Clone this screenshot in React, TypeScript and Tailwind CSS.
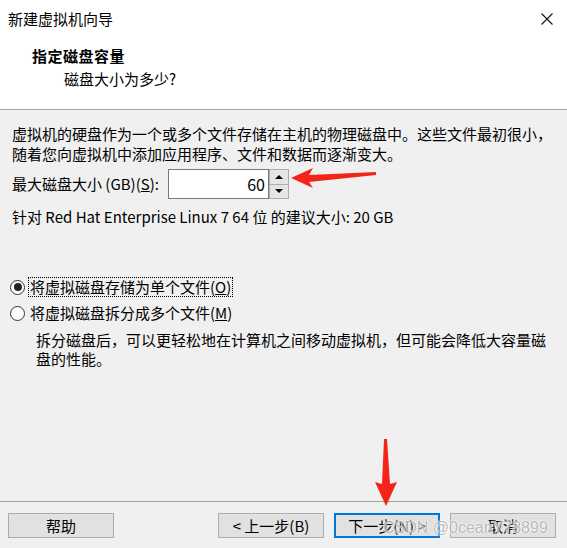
const font = { fontFamily: '"Noto Sans CJK SC", "Noto Sans", sans-serif' };

const Btn = ({ children, primary }: { children: React.ReactNode; primary?: boolean }) => (
  <div
    className={
      "w-[106px] h-[25px] flex items-center justify-center bg-[#e1e1e1] text-[15px] leading-none text-black " +
      (primary ? "border-2 border-[#0078d7]" : "border border-[#adadad]")
    }
  >
    {children}
  </div>
);

const Radio = ({ checked }: { checked?: boolean }) => (
  <div className="w-[15px] h-[15px] rounded-full border border-[#333] bg-white flex items-center justify-center shrink-0">
    {checked && <div className="w-[8px] h-[8px] rounded-full bg-[#222]" />}
  </div>
);

export default function App() {
  return (
    <div
      className="relative w-[567px] h-[548px] flex flex-col bg-[#f0f0f0] overflow-hidden text-black"
      style={font}
    >
      {/* title bar */}
      <div className="h-[38px] bg-white flex items-center justify-between pl-[8px] pr-[14px]">
        <span className="text-[15px] leading-[20px]">新建虚拟机向导</span>
        <svg width="12" height="12" viewBox="0 0 12 12" className="mt-[-1px]">
          <path d="M0.5 0.5 L11.5 11.5 M11.5 0.5 L0.5 11.5" stroke="#111" strokeWidth="1.1" />
        </svg>
      </div>

      {/* header */}
      <div className="h-[72px] bg-white border-b border-[#a0a0a0] pt-[8px]">
        <div className="pl-[32px] text-[15px] leading-[20px] font-bold tracking-[0.5px]">指定磁盘容量</div>
        <div className="pl-[64px] mt-[3px] text-[15px] leading-[20px]">磁盘大小为多少?</div>
      </div>

      {/* body */}
      <div className="flex-1 pl-[12px] pr-[8px] pt-[14px] text-[15px]">
        <p className="leading-[20px] whitespace-nowrap">
          虚拟机的硬盘作为一个或多个文件存储在主机的物理磁盘中。这些文件最初很小，
          <br />
          随着您向虚拟机中添加应用程序、文件和数据而逐渐变大。
        </p>

        <div className="mt-[5px] flex items-center h-[30px]">
          <span className="w-[156px] leading-[20px]">
            最大磁盘大小 (GB)(<span className="underline">S</span>):
          </span>
          <div className="w-[101px] h-[30px] bg-white border border-[#7a7a7a] flex items-center justify-end pr-[3px] text-[16px]">
            60
          </div>
          <div className="flex flex-col w-[20px] h-[30px]">
            <div className="flex-1 bg-[#e5e5e5] border border-[#adadad] flex items-center justify-center">
              <svg width="8" height="4" viewBox="0 0 8 4"><path d="M0 4 L4 0 L8 4 Z" fill="#000" /></svg>
            </div>
            <div className="flex-1 bg-[#e5e5e5] border border-[#adadad] border-t-0 flex items-center justify-center">
              <svg width="8" height="4" viewBox="0 0 8 4"><path d="M0 0 L8 0 L4 4 Z" fill="#000" /></svg>
            </div>
          </div>
        </div>

        <div className="mt-[8px] leading-[20px]">针对 Red Hat Enterprise Linux 7 64 位 的建议大小: 20 GB</div>

        <div className="mt-[50px] flex flex-col gap-[6px]">
          <div className="flex items-center h-[20px] -ml-[2px] gap-[3px]">
            <Radio checked />
            <span className="leading-[18px] border border-dotted border-black px-[1px]">
              将虚拟磁盘存储为单个文件(<span className="underline">O</span>)
            </span>
          </div>
          <div className="flex items-center h-[20px] -ml-[2px] gap-[4px]">
            <Radio />
            <span className="leading-[18px] ml-[1px]">
              将虚拟磁盘拆分成多个文件(<span className="underline">M</span>)
            </span>
          </div>
        </div>

        <p className="mt-[7px] pl-[24px] pr-[10px] leading-[19px]">
          拆分磁盘后，可以更轻松地在计算机之间移动虚拟机，但可能会降低大容量磁盘的性能。
        </p>
      </div>

      {/* footer */}
      <div className="border-t border-[#a0a0a0] pt-[11px] pb-[10px] pl-[8px] pr-[11px] flex justify-between">
        <Btn>帮助</Btn>
        <div className="flex gap-[10px]">
          <Btn>&lt; 上一步(B)</Btn>
          <Btn primary>下一步(N) &gt;</Btn>
          <Btn>取消</Btn>
        </div>
      </div>

      {/* annotation arrows */}
      <svg className="absolute left-0 top-0 pointer-events-none" width="567" height="548">
        <polygon
          points="291,178 313,168 309,175 376,172 376,175 309,182 313,188"
          fill="#f4241a"
        />
        <polygon
          points="384,439 387,439 390,484 397,482 386,506 375,482 382,484"
          fill="#f4241a"
        />
      </svg>

      {/* watermark */}
      <div
        className="absolute left-[383px] top-[518px] text-[16px] leading-[20px] text-[rgba(140,140,140,0.6)] whitespace-nowrap [text-shadow:0_0_2px_#fff,0_0_2px_#fff]"
        style={{ fontFamily: '"Liberation Sans", Arial, sans-serif' }}
      >
        CSDN @0ceanY78899
      </div>
    </div>
  );
}
